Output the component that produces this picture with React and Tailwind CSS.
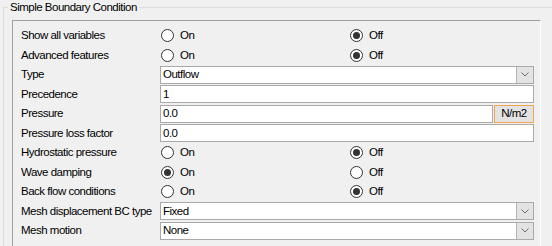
import React from 'react';

const rows = [
  { label: 'Show all variables', kind: 'radio', on: false },
  { label: 'Advanced features', kind: 'radio', on: false },
  { label: 'Type', kind: 'combo', value: 'Outflow' },
  { label: 'Precedence', kind: 'text', value: '1' },
  { label: 'Pressure', kind: 'unit', value: '0.0', unit: 'N/m2' },
  { label: 'Pressure loss factor', kind: 'text', value: '0.0' },
  { label: 'Hydrostatic pressure', kind: 'radio', on: false },
  { label: 'Wave damping', kind: 'radio', on: true },
  { label: 'Back flow conditions', kind: 'radio', on: false },
  { label: 'Mesh displacement BC type', kind: 'combo', value: 'Fixed' },
  { label: 'Mesh motion', kind: 'combo', value: 'None' },
];

function Radio({ checked, label }) {
  return (
    <div className="w-[189px] flex items-center gap-[6px]">
      <span className="ml-[1px] w-[13px] h-[13px] rounded-full border border-[#333333] bg-white flex items-center justify-center shrink-0">
        {checked && <span className="w-[7px] h-[7px] rounded-full bg-[#333333]" />}
      </span>
      <span>{label}</span>
    </div>
  );
}

function Chevron() {
  return (
    <svg width="8" height="5" viewBox="0 0 8 5" className="block">
      <path d="M0.5 0.5 L4 4 L7.5 0.5" fill="none" stroke="#6d6d6d" strokeWidth="1" />
    </svg>
  );
}

function Control({ row }) {
  if (row.kind === 'radio') {
    return (
      <div className="flex items-center">
        <Radio checked={row.on} label="On" />
        <Radio checked={!row.on} label="Off" />
      </div>
    );
  }
  if (row.kind === 'combo') {
    return (
      <div className="w-[374px] h-[18px] flex border border-[#a9a9a9] bg-white">
        <div className="flex-1 pl-[2px] flex items-center">{row.value}</div>
        <div className="w-[17px] h-full bg-[#e3e3e3] border-l border-[#b4b4b4] flex items-center justify-center">
          <Chevron />
        </div>
      </div>
    );
  }
  if (row.kind === 'unit') {
    return (
      <div className="w-[374px] h-[18px] flex gap-[1px]">
        <div className="w-[333px] h-full border border-[#a9a9a9] bg-white pl-[2px] flex items-center">{row.value}</div>
        <div className="flex-1 h-full border border-[#f0a54c] bg-[#e3e3e3] flex items-center justify-center">{row.unit}</div>
      </div>
    );
  }
  return (
    <div className="w-[374px] h-[18px] border border-[#a9a9a9] bg-white pl-[2px] flex items-center">{row.value}</div>
  );
}

export default function App() {
  return (
    <div className="w-[552px] h-[246px] bg-[#f0f0f0] overflow-hidden text-[11.5px] tracking-[-0.5px] text-black font-['Liberation_Sans',Arial,sans-serif]">
      <fieldset className="ml-[3px] w-[560px] h-[260px] border border-[#dcdcdc]">
        <legend className="ml-[4px] px-[2px] leading-[14px]">Simple Boundary Condition</legend>

        {/* inner sunken panel */}
        <div className="mt-[6px] ml-[8px] w-[529px] h-[240px] border-t border-l border-r border-t-[#a0a0a0] border-l-[#a0a0a0] border-r-white pt-[5px] pl-[8px]">
          {rows.map((row) => (
            <div key={row.label} className="h-[19.5px] flex items-center">
              <div className="w-[139px] shrink-0">{row.label}</div>
              <Control row={row} />
            </div>
          ))}
        </div>
      </fieldset>
    </div>
  );
}
